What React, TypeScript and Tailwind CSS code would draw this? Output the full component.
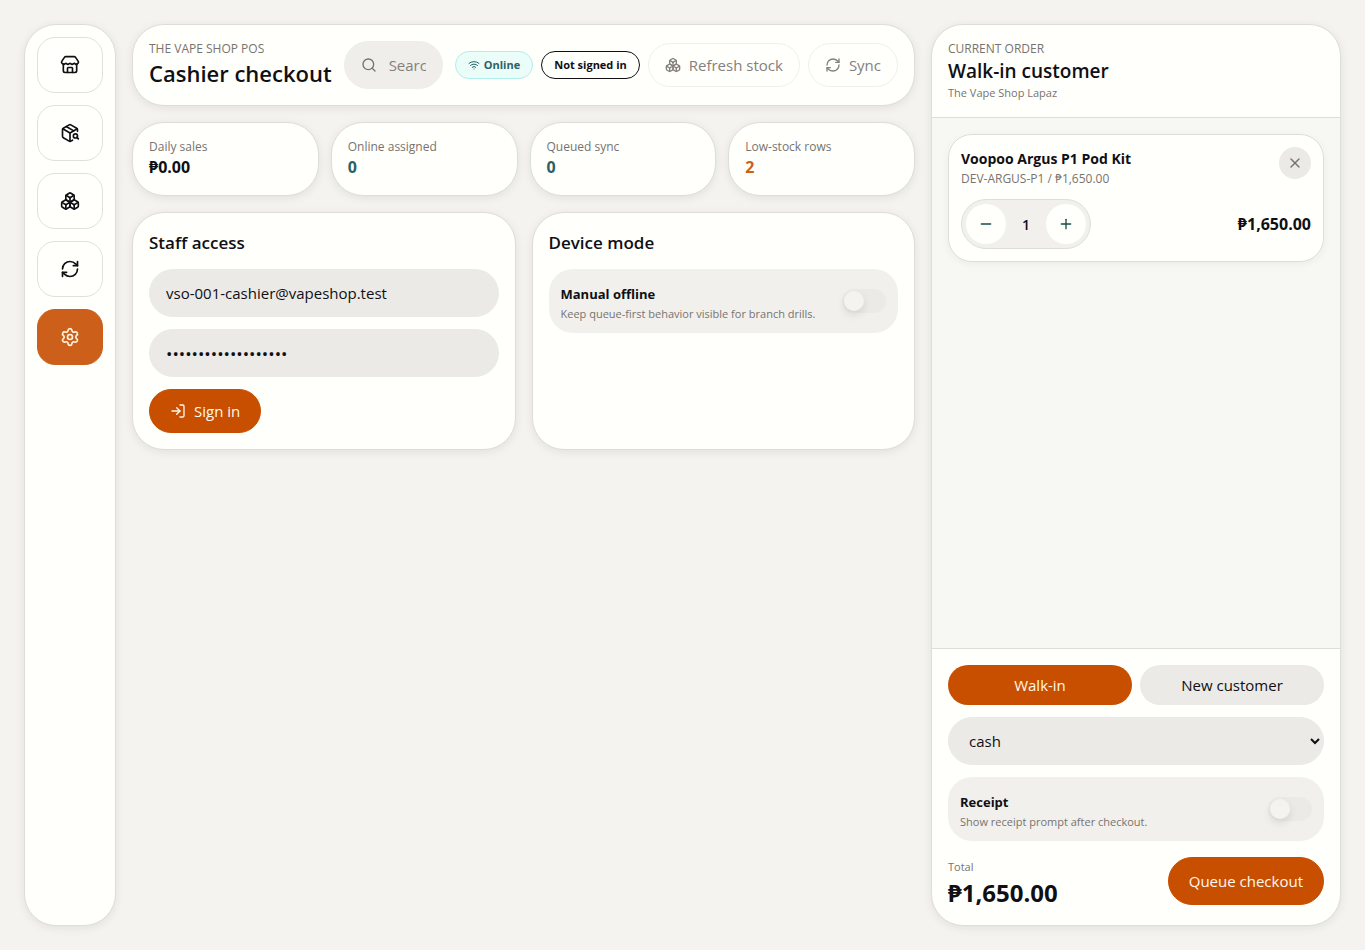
import React, { useState } from 'react';
import { Boxes, LogIn, Minus, PackageSearch, Plus, RefreshCw, Search, Settings, Store, Wifi, X } from 'lucide-react';

const navItems = [
    { label: 'Store', icon: Store },
    { label: 'Products', icon: PackageSearch },
    { label: 'Stock', icon: Boxes },
    { label: 'Sync', icon: RefreshCw },
    { label: 'Settings', icon: Settings },
];

const stats = [
    { label: 'Daily sales', value: '₱0.00', color: 'text-[#0f0f14]' },
    { label: 'Online assigned', value: '0', color: 'text-[#2b6166]' },
    { label: 'Queued sync', value: '0', color: 'text-[#2b6166]' },
    { label: 'Low-stock rows', value: '2', color: 'text-[#cc601a]' },
];

const card = 'rounded-[32px] border border-[#deddda] bg-[#fffffc] shadow-[0_2px_10px_rgba(0,0,0,0.08)]';

type ToggleRowProps = { id: string; title: string; hint: string };

const ToggleRow = ({ id, title, hint }: ToggleRowProps) => {
    const [on, setOn] = useState(false);
    return (
        <label htmlFor={id} className="flex h-16 items-center justify-between gap-3 rounded-3xl bg-[#f1f0ed] px-3">
            <span className="min-w-0 pt-1.5">
                <span className="block text-[13px] leading-5 font-bold">{title}</span>
                <span className="block text-[11px] leading-5 text-[#78736f]">{hint}</span>
            </span>
            <input
                id={id}
                type="checkbox"
                role="switch"
                checked={on}
                onChange={() => setOn(!on)}
                className="h-6 w-11 shrink-0 cursor-pointer appearance-none rounded-full bg-[#ebeae7] p-0.5 before:block before:size-5 before:rounded-full before:bg-[#f4f3f0] before:shadow-[0_4px_8px_rgba(0,0,0,0.1)] before:transition-transform checked:bg-[#c84f00] checked:before:translate-x-5"
            />
        </label>
    );
};

const App = () => {
    const [quantity, setQuantity] = useState(1);
    const [customer, setCustomer] = useState('walk-in');
    const total = `₱${(quantity * 1650).toLocaleString('en-US', { minimumFractionDigits: 2 })}`;

    return (
        <div className="flex min-h-screen gap-4 bg-[#f4f3f0] p-6 font-['Open_Sans','Noto_Sans',sans-serif] text-[#0f0f14]">
            <nav aria-label="Main" className={`flex w-23 shrink-0 flex-col gap-3 p-3 ${card}`}>
                {navItems.map(({ label, icon: Icon }) => (
                    <button
                        key={label}
                        aria-label={label}
                        className={`flex h-14 items-center justify-center rounded-[18px] border ${label === 'Settings' ? 'border-[#cc601a] bg-[#cc601a] text-[#fff3dd]' : 'border-[#e0dfdc]'}`}
                    >
                        <Icon size={20} />
                    </button>
                ))}
            </nav>

            <main className="flex min-w-0 flex-1 flex-col gap-4">
                <header className={`flex items-center gap-3 p-4 ${card}`}>
                    <div className="shrink-0">
                        <p className="text-[12px] leading-4 text-[#78736f] uppercase">The Vape Shop POS</p>
                        <h1 className="text-[22px] leading-8 font-semibold">Cashier checkout</h1>
                    </div>
                    <label className="flex h-12 min-w-0 flex-1 items-center gap-3 rounded-3xl border border-[#efeeeb] bg-[#efeeeb] px-4">
                        <Search size={16} className="shrink-0 text-[#78716c]" />
                        <input type="text" aria-label="Search products" placeholder="Search products" className="w-full min-w-0 bg-transparent text-[15px] outline-none placeholder:text-[#85807c]" />
                    </label>
                    <div className="flex shrink-0 items-center gap-2">
                        <span className="flex h-7 items-center gap-1 rounded-full border border-[#b0eeec] bg-[#ebfdf9] px-3 text-[11px] font-bold text-[#2b6166]">
                            <Wifi size={12} />
                            Online
                        </span>
                        <span className="flex h-7 items-center rounded-full border border-[#0f0f14] px-3 text-[11px] font-bold">Not signed in</span>
                        <button className="flex h-11 items-center gap-2 rounded-full border border-[#f0efec] px-4 text-[15px] text-[#85807c]">
                            <Boxes size={16} />
                            Refresh stock
                        </button>
                        <button className="flex h-11 items-center gap-2 rounded-full border border-[#f0efec] px-4 text-[15px] text-[#85807c]">
                            <RefreshCw size={16} />
                            Sync
                        </button>
                    </div>
                </header>

                <section aria-label="Today" className="grid grid-cols-4 gap-3">
                    {stats.map(s => (
                        <div key={s.label} className={`p-4 ${card}`}>
                            <p className="text-[12px] leading-4 text-[#78736f]">{s.label}</p>
                            <p className={`text-[16px] leading-6 font-bold ${s.color}`}>{s.value}</p>
                        </div>
                    ))}
                </section>

                <section className="grid grid-cols-2 gap-4">
                    <form className={`flex flex-col items-start gap-3 p-4 ${card}`} onSubmit={e => e.preventDefault()}>
                        <h2 className="text-[17px] leading-7 font-semibold">Staff access</h2>
                        <input type="email" aria-label="Email" defaultValue="vso-001-cashier@vapeshop.test" className="h-12 w-full rounded-3xl border border-[#ebeae7] bg-[#ebeae7] px-4 text-[15px]" />
                        <input type="password" aria-label="Password" defaultValue="vapeshop-cashier-01" className="h-12 w-full rounded-3xl border border-[#ebeae7] bg-[#ebeae7] px-4 text-[17px]" />
                        <button className="flex h-11 items-center gap-2 rounded-full border border-[#c84f00] bg-[#c84f00] px-5 text-[15px] text-[#fff8ec]">
                            <LogIn size={16} />
                            Sign in
                        </button>
                    </form>
                    <div className={`flex flex-col gap-3 p-4 ${card}`}>
                        <h2 className="text-[17px] leading-7 font-semibold">Device mode</h2>
                        <ToggleRow id="manual-offline" title="Manual offline" hint="Keep queue-first behavior visible for branch drills." />
                    </div>
                </section>
            </main>

            <aside className={`flex w-[410px] shrink-0 flex-col overflow-hidden ${card}`}>
                <header className="border-b border-[#dddedb] p-4">
                    <p className="text-[12px] leading-4 text-[#78736f] uppercase">Current order</p>
                    <h2 className="text-[19px] leading-7 font-semibold">Walk-in customer</h2>
                    <p className="text-[11px] leading-4 text-[#78736f]">The Vape Shop Lapaz</p>
                </header>

                <div className="flex-1 bg-[#f7f8f4] p-4">
                    <article className="rounded-3xl border border-[#deddda] bg-[#fffffc] p-3 shadow-[0_2px_8px_rgba(0,0,0,0.05)]">
                        <div className="flex items-start justify-between">
                            <div>
                                <h3 className="text-[14px] leading-6 font-bold">Voopoo Argus P1 Pod Kit</h3>
                                <p className="text-[12px] leading-4 text-[#78736f]">DEV-ARGUS-P1 / ₱1,650.00</p>
                            </div>
                            <button aria-label="Remove item" className="flex size-8 items-center justify-center rounded-full bg-[#ebeae7] text-[#78716c]">
                                <X size={16} />
                            </button>
                        </div>
                        <div className="mt-3 flex items-center justify-between">
                            <div className="flex items-center rounded-full border border-[#deddda] bg-[#f1f0ed] p-1">
                                <button aria-label="Decrease quantity" onClick={() => setQuantity(Math.max(1, quantity - 1))} className="flex size-10 items-center justify-center rounded-full bg-[#fffffc] text-[#174f4b]">
                                    <Minus size={16} />
                                </button>
                                <span className="w-10 text-center text-[14px] font-semibold">{quantity}</span>
                                <button aria-label="Increase quantity" onClick={() => setQuantity(quantity + 1)} className="flex size-10 items-center justify-center rounded-full bg-[#fffffc] text-[#174f4b]">
                                    <Plus size={16} />
                                </button>
                            </div>
                            <p className="text-[16px] font-bold">{total}</p>
                        </div>
                    </article>
                </div>

                <footer className="flex flex-col gap-3 border-t border-[#dddedb] p-4">
                    <div className="grid grid-cols-2 gap-2">
                        <button onClick={() => setCustomer('walk-in')} className={`h-10 rounded-full text-[15px] ${customer === 'walk-in' ? 'bg-[#c84f00] text-[#fff8ec]' : 'bg-[#ebeae7]'}`}>Walk-in</button>
                        <button onClick={() => setCustomer('new')} className={`h-10 rounded-full text-[15px] ${customer === 'new' ? 'bg-[#c84f00] text-[#fff8ec]' : 'bg-[#ebeae7]'}`}>New customer</button>
                    </div>
                    <select aria-label="Payment method" className="h-12 w-full rounded-3xl border border-[#ebeae7] bg-[#ebeae7] pl-4 text-[15px]">
                        <option>cash</option>
                        <option>card</option>
                    </select>
                    <ToggleRow id="receipt" title="Receipt" hint="Show receipt prompt after checkout." />
                    <div className="flex items-start justify-between pt-1">
                        <div>
                            <p className="text-[11px] leading-5 text-[#78736f]">Total</p>
                            <p className="text-[24px] leading-8 font-bold">{total}</p>
                        </div>
                        <button className="h-12 rounded-full border border-[#c84f00] bg-[#c84f00] px-5 text-[15px] text-[#fff8ec]">Queue checkout</button>
                    </div>
                </footer>
            </aside>
        </div>
    );
};

export default App;
